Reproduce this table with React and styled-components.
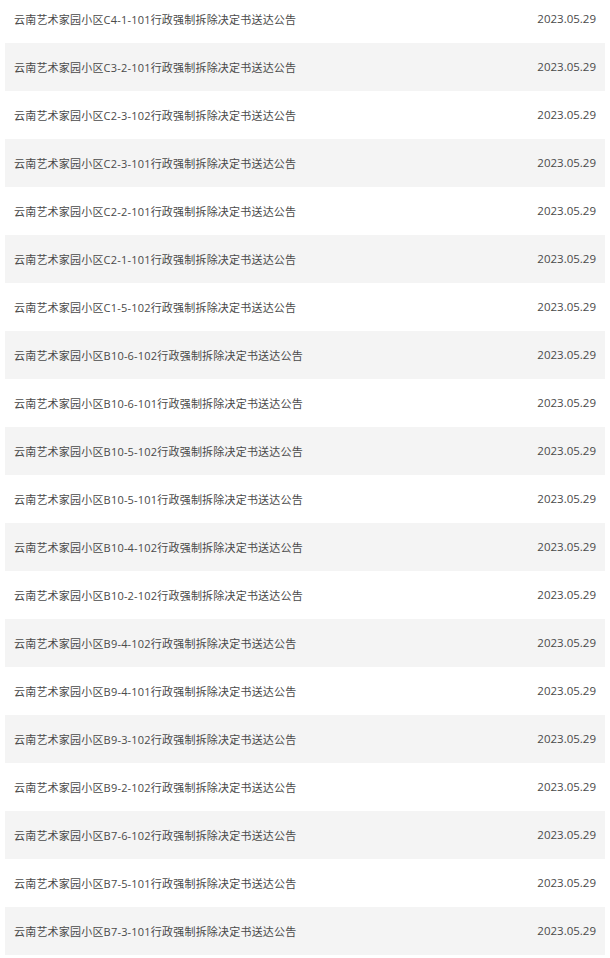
import React from "react";
import styled, { createGlobalStyle } from "styled-components";

const GlobalStyle = createGlobalStyle`
  html, body {
    margin: 0;
    padding: 0;
    background: #ffffff;
  }
  body {
    font-family: "Open Sans", "Noto Sans CJK SC", sans-serif;
  }
`;

const List = styled.ul`
  list-style: none;
  margin: -5px 0 0 0;
  padding: 0 5px;
`;

const Row = styled.li`
  display: flex;
  align-items: center;
  justify-content: space-between;
  height: 48px;
  padding: 0 9px 1px;
  box-sizing: border-box;
  background: ${(p) => (p.$shaded ? "#f4f4f4" : "#ffffff")};
  font-size: 11px;
  color: #4a4a4a;
`;

const Title = styled.a`
  color: inherit;
  text-decoration: none;
  white-space: nowrap;
  letter-spacing: 0.2px;
`;

const Date = styled.span`
  color: #4a4a4a;
  white-space: nowrap;
  font-size: 11.5px;
`;

const codes = [
  "C4-1-101",
  "C3-2-101",
  "C2-3-102",
  "C2-3-101",
  "C2-2-101",
  "C2-1-101",
  "C1-5-102",
  "B10-6-102",
  "B10-6-101",
  "B10-5-102",
  "B10-5-101",
  "B10-4-102",
  "B10-2-102",
  "B9-4-102",
  "B9-4-101",
  "B9-3-102",
  "B9-2-102",
  "B7-6-102",
  "B7-5-101",
  "B7-3-101",
];

export default function App() {
  return (
    <>
      <GlobalStyle />
      <List>
        {codes.map((c, i) => (
          <Row key={c} $shaded={i % 2 === 1}>
            <Title href="#">{`云南艺术家园小区${c}行政强制拆除决定书送达公告`}</Title>
            <Date>2023.05.29</Date>
          </Row>
        ))}
      </List>
    </>
  );
}
